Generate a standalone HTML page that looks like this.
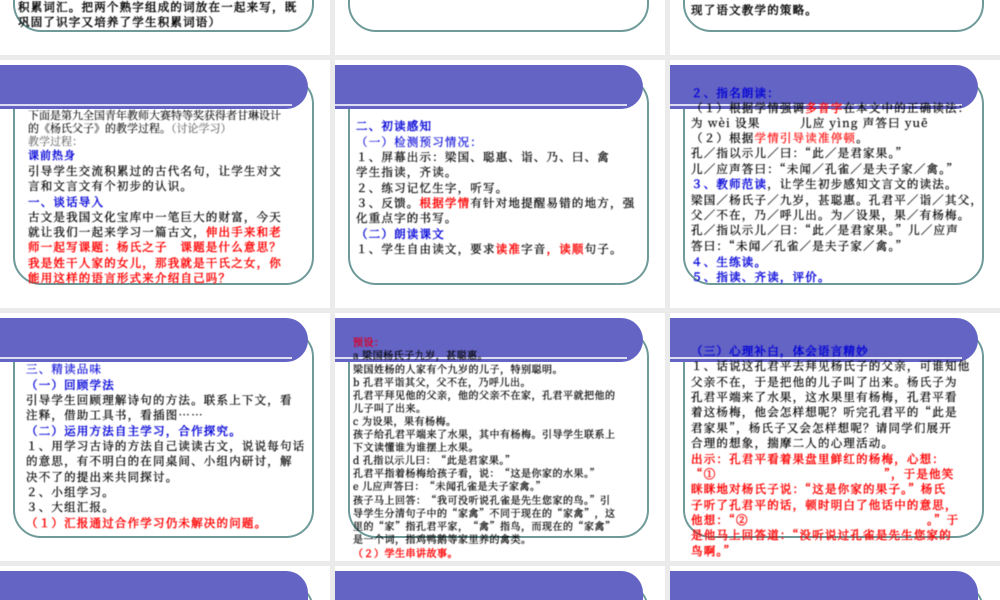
<!DOCTYPE html>
<html lang="zh-CN">
<head>
<meta charset="utf-8">
<title>杨氏之子</title>
<style>
html,body{margin:0;padding:0;width:1000px;height:600px;overflow:hidden;background:#ebebeb}
#p{position:relative;width:1000px;height:600px;overflow:hidden;background:#ebebeb}
.s{position:absolute;width:330px;height:247.5px;background:#fff;overflow:hidden}
.s4{height:34.5px}
.s4 .h{height:29.5px;border-radius:0 22px 0 0}
.s4 svg{position:absolute;left:0;top:0;display:block}
.b{position:absolute;left:13px;top:16px;width:297px;height:205px;border:2px solid #6f9a9a;border-radius:28px;box-sizing:content-box}
.h{position:absolute;left:0;top:5px;width:307.7px;height:44px;background:#6464c4;border-radius:0 22px 22px 0}
.w{position:absolute;left:0;top:43.5px;width:291.7px;height:2px;background:#dcdcf2}
#t{position:absolute;left:0;top:0;width:1000px;height:600px;overflow:hidden;filter:blur(.5px)}
.l{position:absolute;white-space:nowrap;height:16px;line-height:16px;font-size:11.5px;letter-spacing:1.2px;color:#000;font-family:"Noto Serif CJK SC","Liberation Serif",serif;-webkit-text-stroke:.25px currentColor}
.m{font-size:11px;letter-spacing:0;-webkit-text-stroke:.1px currentColor}
.n{font-size:10px;letter-spacing:.5px}
.r{color:#f00;-webkit-text-stroke:.45px currentColor}
.u{color:#0000d8;-webkit-text-stroke:.45px currentColor}
.g{color:#666}
.k{-webkit-text-stroke:.45px currentColor}
.t{-webkit-text-stroke:.2px currentColor}
</style>
</head>
<body>
<div id="p">
<!-- row 1 -->
<div class="s" style="left:0;top:-193px"><div class="b"></div></div>
<div class="s" style="left:335px;top:-193px"><div class="b"></div></div>
<div class="s" style="left:670px;top:-193px"><div class="b"></div></div>
<!-- row 2 -->
<div class="s" style="left:0;top:60px"><div class="b"></div><div class="h"></div><div class="w"></div></div>
<div class="s" style="left:335px;top:60px"><div class="b"></div><div class="h"></div><div class="w"></div></div>
<div class="s" style="left:670px;top:60px"><div class="b"></div><div class="h"></div><div class="w"></div></div>
<!-- row 3 -->
<div class="s" style="left:0;top:313px"><div class="b"></div><div class="h"></div><div class="w"></div></div>
<div class="s" style="left:335px;top:313px"><div class="b"></div><div class="h"></div><div class="w"></div></div>
<div class="s" style="left:670px;top:313px"><div class="b"></div><div class="h"></div><div class="w"></div></div>
<!-- row 4 -->
<div class="s s4" style="left:0;top:565.5px"><svg width="330" height="34.5" viewBox="0 0 330 34.5"><path d="M286 17A27 27 0 0 1 311.3 34.5" fill="none" stroke="#6f9a9a" stroke-width="2"/></svg><div class="h"></div></div>
<div class="s s4" style="left:335px;top:565.5px"><svg width="330" height="34.5" viewBox="0 0 330 34.5"><path d="M286 17A27 27 0 0 1 311.3 34.5" fill="none" stroke="#6f9a9a" stroke-width="2"/></svg><div class="h"></div></div>
<div class="s s4" style="left:670px;top:565.5px"><svg width="330" height="34.5" viewBox="0 0 330 34.5"><path d="M286 17A27 27 0 0 1 311.3 34.5" fill="none" stroke="#6f9a9a" stroke-width="2"/></svg><div class="h"></div></div>

<div id="t">
<!-- top row text -->
<div class="l k" style="left:18px;top:-1px">积累词汇。把两个熟字组成的词放在一起来写，既</div>
<div class="l k" style="left:18px;top:14px">巩固了识字又培养了学生积累词语）</div>
<div class="l k" style="left:691px;top:2px">现了语文教学的策略。</div>

<!-- slide A -->
<div class="l m" style="left:28px;top:107px">下面是第九全国青年教师大赛特等奖获得者甘琳设计</div>
<div class="l m" style="left:28px;top:120px">的《杨氏父子》的教学过程。<span class="g">（讨论学习）</span></div>
<div class="l m g" style="left:28px;top:133px">教学过程：</div>
<div class="l u" style="left:28px;top:147px;font-size:11px;letter-spacing:1px">课前热身</div>
<div class="l" style="left:28px;top:163px">引导学生交流积累过的古代名句，让学生对文</div>
<div class="l" style="left:28px;top:178px">言和文言文有个初步的认识。</div>
<div class="l u" style="left:28px;top:194px">一、谈话导入</div>
<div class="l" style="left:28px;top:209px">古文是我国文化宝库中一笔巨大的财富，今天</div>
<div class="l" style="left:28px;top:224px">就让我们一起来学习一篇古文，<span class="r">伸出手来和老</span></div>
<div class="l r" style="left:28px;top:239px">师一起写课题：杨氏之子　课题是什么意思？</div>
<div class="l r" style="left:28px;top:255px">我是姓干人家的女儿，那我就是干氏之女，你</div>
<div class="l r" style="left:28px;top:270px">能用这样的语言形式来介绍自己吗？</div>

<!-- slide B -->
<div class="l u" style="left:356px;top:118px">二、初读感知</div>
<div class="l u t" style="left:356px;top:134px">（一）检测预习情况：</div>
<div class="l" style="left:356px;top:149px">１、屏幕出示：梁国、聪惠、诣、乃、曰、禽</div>
<div class="l" style="left:356px;top:164px">学生指读，齐读。</div>
<div class="l" style="left:356px;top:180px">２、练习记忆生字，听写。</div>
<div class="l" style="left:356px;top:195px">３、反馈。<span class="r">根据学情</span>有针对地提醒易错的地方，强</div>
<div class="l" style="left:356px;top:210px">化重点字的书写。</div>
<div class="l u" style="left:356px;top:226px">（二）朗读课文</div>
<div class="l" style="left:356px;top:241px">１、学生自由读文，要求<span class="r">读准</span>字音<span class="r">，读顺</span>句子。</div>

<!-- slide C -->
<div class="l u" style="left:691px;top:85px">２、指名朗读：</div>
<div class="l" style="left:691px;top:100px">（１）根据学情强调<span class="r">多音字</span>在本文中的正确读法：</div>
<div class="l" style="left:691px;top:115px">为 wèi 设果</div>
<div class="l" style="left:800px;top:115px">儿应 yìng 声答曰 yuē</div>
<div class="l" style="left:691px;top:130px">（２）根据<span class="r t">学情引导读准停顿</span>。</div>
<div class="l" style="left:691px;top:145px">孔／指以示儿／曰：“此／是君家果。”</div>
<div class="l" style="left:691px;top:161px">儿／应声答曰：“未闻／孔雀／是夫子家／禽。”</div>
<div class="l" style="left:691px;top:176px"><span class="u">３、教师范读</span>，让学生初步感知文言文的读法。</div>
<div class="l" style="left:691px;top:192px">梁国／杨氏子／九岁，甚聪惠。孔君平／诣／其父，</div>
<div class="l" style="left:691px;top:207px">父／不在，乃／呼儿出。为／设果，果／有杨梅。</div>
<div class="l" style="left:691px;top:222px">孔／指以示儿／曰：“此／是君家果。”儿／应声</div>
<div class="l" style="left:691px;top:238px">答曰：“未闻／孔雀／是夫子家／禽。”</div>
<div class="l u" style="left:691px;top:254px">４、生练读。</div>
<div class="l u" style="left:691px;top:269px">５、指读、齐读，评价。</div>

<!-- slide D -->
<div class="l u t" style="left:26px;top:361px">三、精读品味</div>
<div class="l u" style="left:26px;top:377px">（一）回顾学法</div>
<div class="l" style="left:26px;top:392px">引导学生回顾理解诗句的方法。联系上下文，看</div>
<div class="l" style="left:26px;top:407px">注释，借助工具书，看插图……</div>
<div class="l u" style="left:26px;top:423px">（二）运用方法自主学习，合作探究。</div>
<div class="l" style="left:26px;top:438px">１、用学习古诗的方法自己读读古文，说说每句话</div>
<div class="l" style="left:26px;top:453px">的意思，有不明白的在同桌间、小组内研讨，解</div>
<div class="l" style="left:26px;top:469px">决不了的提出来共同探讨。</div>
<div class="l" style="left:26px;top:484px">２、小组学习。</div>
<div class="l" style="left:26px;top:499px">３、大组汇报。</div>
<div class="l r" style="left:26px;top:515px">（１）汇报通过合作学习仍未解决的问题。</div>

<!-- slide E -->
<div class="l n r" style="left:353px;top:334px;color:#d8002a">预设：</div>
<div class="l n" style="left:353px;top:347px">a 梁国杨氏子九岁，甚聪惠。</div>
<div class="l n" style="left:353px;top:361px">梁国姓杨的人家有个九岁的儿子，特别聪明。</div>
<div class="l n" style="left:353px;top:374px">b 孔君平诣其父，父不在，乃呼儿出。</div>
<div class="l n" style="left:353px;top:387px">孔君平拜见他的父亲，他的父亲不在家，孔君平就把他的</div>
<div class="l n" style="left:353px;top:400px">儿子叫了出来。</div>
<div class="l n" style="left:353px;top:413px">c 为设果，果有杨梅。</div>
<div class="l n" style="left:353px;top:426px">孩子给孔君平端来了水果，其中有杨梅。引导学生联系上</div>
<div class="l n" style="left:353px;top:439px">下文读懂谁为谁摆上水果。</div>
<div class="l n" style="left:353px;top:452px">d 孔指以示儿曰：“此是君家果。”</div>
<div class="l n" style="left:353px;top:465px">孔君平指着杨梅给孩子看，说：“这是你家的水果。”</div>
<div class="l n" style="left:353px;top:478px">e 儿应声答曰：“未闻孔雀是夫子家禽。”</div>
<div class="l n" style="left:353px;top:492px">孩子马上回答：“我可没听说孔雀是先生您家的鸟。”引</div>
<div class="l n" style="left:353px;top:505px">导学生分清句子中的“家禽”不同于现在的“家禽”，这</div>
<div class="l n" style="left:353px;top:518px">里的“家”指孔君平家，“禽”指鸟，而现在的“家禽”</div>
<div class="l n" style="left:353px;top:531px">是一个词，指鸡鸭鹅等家里养的禽类。</div>
<div class="l n r" style="left:353px;top:545px">（２）学生串讲故事。</div>

<!-- slide F -->
<div class="l u" style="left:691px;top:343px">（三）心理补白，体会语言精妙</div>
<div class="l" style="left:691px;top:358px">１、话说这孔君平去拜见杨氏子的父亲，可谁知他</div>
<div class="l" style="left:691px;top:374px">父亲不在，于是把他的儿子叫了出来。杨氏子为</div>
<div class="l" style="left:691px;top:389px">孔君平端来了水果，这水果里有杨梅，孔君平看</div>
<div class="l" style="left:691px;top:404px">着这杨梅，他会怎样想呢？听完孔君平的“此是</div>
<div class="l" style="left:691px;top:420px">君家果”，杨氏子又会怎样想呢？请同学们展开</div>
<div class="l" style="left:691px;top:435px">合理的想象，揣摩二人的心理活动。</div>
<div class="l r" style="left:691px;top:451px">出示：孔君平看着果盘里鲜红的杨梅，心想：</div>
<div class="l r" style="left:691px;top:466px">“①</div>
<div class="l r" style="left:884px;top:466px">”，于是他笑</div>
<div class="l r" style="left:691px;top:481px">眯眯地对杨氏子说：“这是你家的果子。”杨氏</div>
<div class="l r" style="left:691px;top:497px">子听了孔君平的话，顿时明白了他话中的意思，</div>
<div class="l r" style="left:691px;top:512px">他想：“②</div>
<div class="l r" style="left:927px;top:512px">。”于</div>
<div class="l r" style="left:691px;top:527px">是他马上回答道：“没听说过孔雀是先生您家的</div>
<div class="l r" style="left:691px;top:543px">鸟啊。”</div>
</div>
</div>
</body>
</html>
